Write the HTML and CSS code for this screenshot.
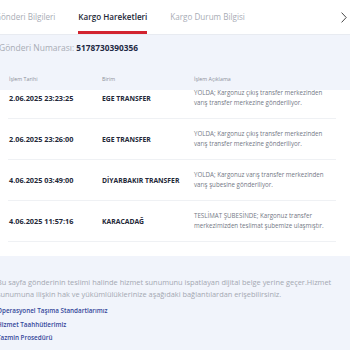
FILE: index.html
```html
<!DOCTYPE html>
<html lang="tr">
<head>
    <meta charset="UTF-8">
    <meta name="viewport" content="width=device-width, initial-scale=1.0">
    <title>Kargo Hareketleri</title>
    <link rel="stylesheet" href="styles.css">
</head>
<body>
    <div class="page">
        <nav class="tabs">
            <div class="tab-list">
                <span class="tab">Gönderi Bilgileri</span>
                <span class="tab active">Kargo Hareketleri</span>
                <span class="tab">Kargo Durum Bilgisi</span>
            </div>
            <span class="tab-next">
                <svg width="6" height="11" viewBox="0 0 6 11"><path d="M0.6 0.6 L5.2 5.5 L0.6 10.4" fill="none" stroke="#333" stroke-width="0.9"/></svg>
            </span>
        </nav>

        <div class="summary">
            <div class="shipment">Gönderi Numarası: <strong>5178730390356</strong></div>
            <div class="table-head">
                <span>İşlem Tarihi</span>
                <span>Birim</span>
                <span>İşlem Açıklama</span>
            </div>
        </div>

        <div class="table-body">
            <div class="rows">
                <div class="row">
                    <span class="date">2.06.2025 23:23:25</span>
                    <span class="unit">EGE TRANSFER</span>
                    <span class="desc">YOLDA; Kargonuz çıkış transfer merkezinden<br>varış transfer merkezine gönderiliyor.</span>
                </div>
                <div class="row">
                    <span class="date">2.06.2025 23:26:00</span>
                    <span class="unit">EGE TRANSFER</span>
                    <span class="desc">YOLDA; Kargonuz çıkış transfer merkezinden<br>varış transfer merkezine gönderiliyor.</span>
                </div>
                <div class="row">
                    <span class="date">4.06.2025 03:49:00</span>
                    <span class="unit">DİYARBAKIR TRANSFER</span>
                    <span class="desc">YOLDA; Kargonuz varış transfer merkezinden<br>varış şubesine gönderiliyor.</span>
                </div>
                <div class="row">
                    <span class="date">4.06.2025 11:57:16</span>
                    <span class="unit">KARACADAĞ</span>
                    <span class="desc">TESLİMAT ŞUBESİNDE; Kargonuz transfer<br>merkezimizden teslimat şubemize ulaşmıştır.</span>
                </div>
            </div>
        </div>

        <section class="notice">
            <p>Bu sayfa gönderinin teslimi halinde hizmet sunumunu ispatlayan dijital belge yerine geçer.Hizmet<br>sunumuna ilişkin hak ve yükümlülüklerinize aşağıdaki bağlantılardan erişebilirsiniz.</p>
            <ul class="links">
                <li><a href="#">Operasyonel Taşıma Standartlarımız</a></li>
                <li><a href="#">Hizmet Taahhütlerimiz</a></li>
                <li><a href="#">Tazmin Prosedürü</a></li>
            </ul>
        </section>
    </div>
</body>
</html>
```

FILE: styles.css
```css
* {
    margin: 0;
    padding: 0;
    box-sizing: border-box;
}

body {
    font-family: 'Open Sans', 'Liberation Sans', sans-serif;
    background: #f1f4fb;
    color: #232838;
    overflow: hidden;
}

.page {
    margin-left: -5px;
    width: calc(100% + 5px);
    height: 100vh;
    background: #f1f4fb;
}

.tabs {
    display: flex;
    justify-content: space-between;
    align-items: center;
    height: 35px;
    background: #fff;
    border-bottom: 1px solid #e8ebf1;
}

.tab-list {
    display: flex;
    gap: 23px;
    height: 100%;
}

.tab {
    display: flex;
    align-items: center;
    height: 34px;
    padding-top: 1px;
    border-bottom: 3px solid transparent;
    font-size: 8.1px;
    color: #a8acb5;
}

.tab.active {
    color: #232838;
    font-weight: 600;
    border-bottom-color: #d2232f;
}

.tab-next {
    display: flex;
    padding-right: 3px;
}

.summary {
    background: #f1f4fb;
    padding: 7px 14px 7px 4px;
}

.shipment {
    line-height: 12px;
    font-size: 8.5px;
    color: #a8acb5;
}

.shipment strong {
    color: #1f2a44;
    font-size: 8.3px;
    font-weight: 700;
}

.table-head {
    display: grid;
    grid-template-columns: 93px 92px 1fr;
    margin-top: 21px;
    padding-left: 10px;
    line-height: 8px;
    font-size: 5.3px;
    color: #8c909a;
}

.table-body {
    height: 166px;
    overflow: hidden;
    background: #fff;
    padding: 0 14px 14px 13px;
}

.rows {
    margin-top: -12px;
}

.row {
    display: grid;
    grid-template-columns: 93px 92px 1fr;
    align-items: center;
    height: 41px;
    padding-left: 1px;
    border-bottom: 1px solid #eff1f4;
}

.date {
    font-size: 7.3px;
    font-weight: 700;
    color: #232838;
}

.unit {
    font-size: 6.8px;
    font-weight: 700;
    color: #232838;
}

.desc {
    font-size: 6.2px;
    line-height: 10px;
    color: #737885;
}

.notice {
    padding: 20px 14px 0 2px;
    background: #f1f4fb;
}

.notice p {
    font-size: 7.4px;
    line-height: 12px;
    color: #a4a8b2;
}

.links {
    list-style: none;
    margin-top: 4px;
    font-size: 6.3px;
}

.links li {
    line-height: 13.5px;
}

.links a {
    font-weight: 600;
    color: #34479a;
    text-decoration: none;
}
```
